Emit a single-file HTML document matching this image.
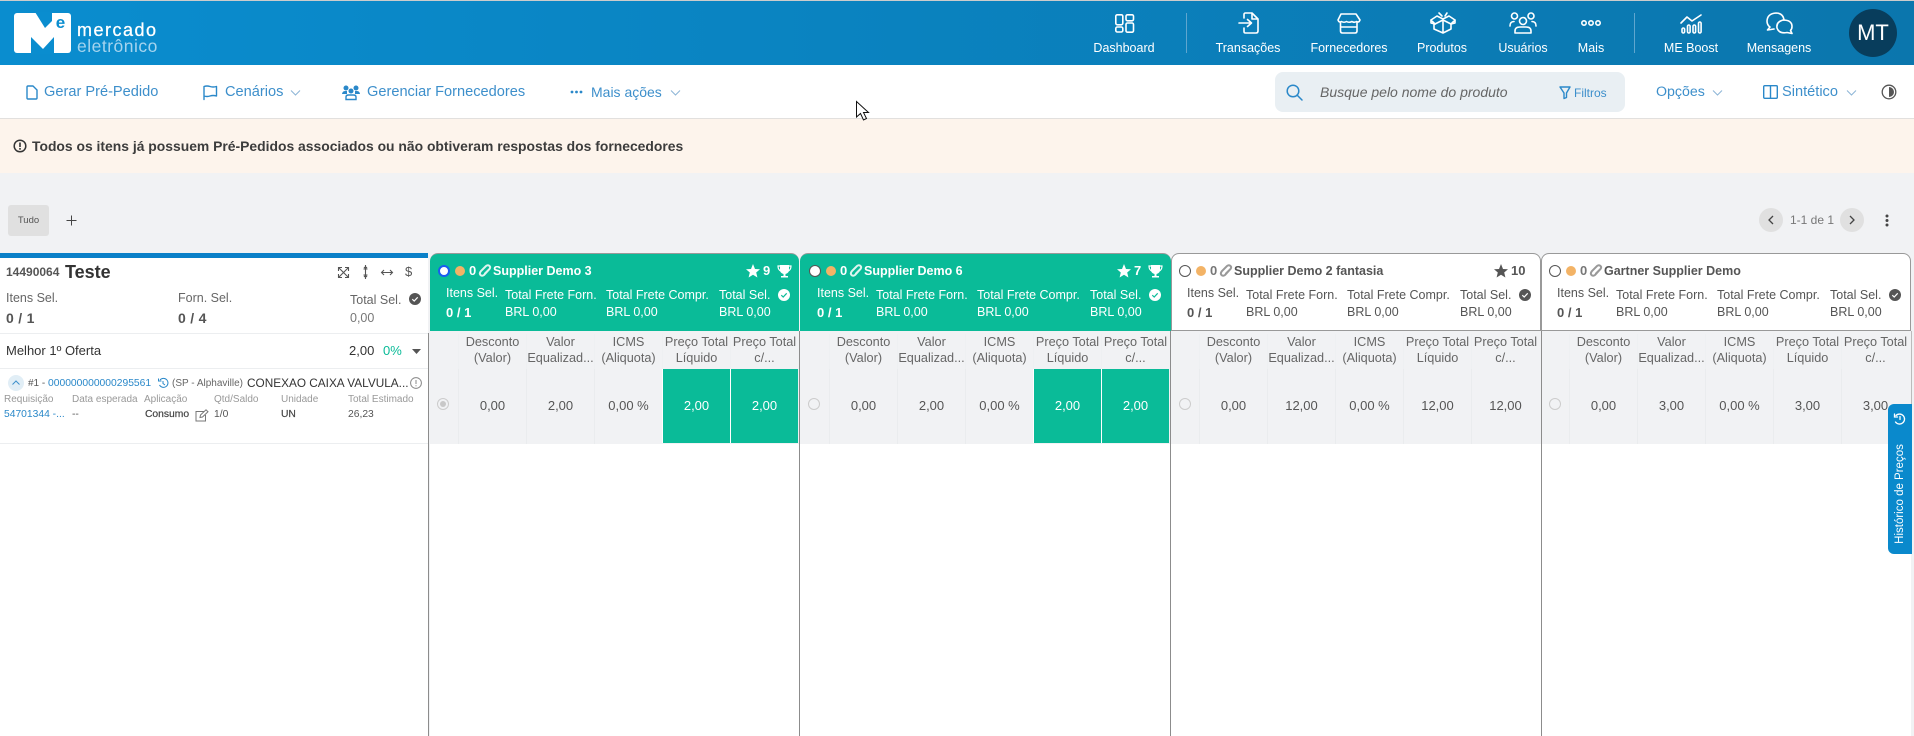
<!DOCTYPE html>
<html lang="pt-BR"><head><meta charset="utf-8"><title>Mercado Eletrônico</title>
<style>
*{box-sizing:border-box}
html,body{margin:0;padding:0;width:1914px;height:736px;overflow:hidden;background:#f1f2f4;font-family:"Liberation Sans",sans-serif;color:#555}
.a{position:absolute}
.t{position:absolute;white-space:nowrap;line-height:16px;height:16px}
svg{position:absolute;overflow:visible}
.nl{position:absolute;top:40px;width:110px;margin-left:-55px;text-align:center;color:#fff;font-size:12.5px;line-height:16px}
.nb{font-size:14.6px;color:#3d8fcb}
.w{fill:none;stroke:#fff;stroke-width:1.6;stroke-linecap:round;stroke-linejoin:round}
.b{fill:none;stroke:#2a88c9;stroke-width:1.4;stroke-linecap:round;stroke-linejoin:round}
.g{fill:none;stroke:#555;stroke-width:1.3;stroke-linecap:round;stroke-linejoin:round}
.col{position:absolute;top:253px;width:370px;height:483px}
.hd{position:absolute;left:0;top:0;width:369px;height:78px;border-radius:8px 8px 0 0;background:#0abb98;color:#fff;border-top:1px solid #999}
.col.x .hd{background:#fff;color:#555;border:1px solid #999;border-bottom:1px solid #999;width:370px}
.col .t{font-size:12.5px}
.hdr{position:absolute;left:0;top:78px;width:369px;height:37px;background:#fff}
.row{position:absolute;left:0;top:115px;width:369px;height:76px;background:#f1f2f4}
.th{position:absolute;top:81px;width:68px;height:35px;text-align:center;font-size:12.7px;line-height:16px;color:#666;white-space:nowrap;overflow:hidden;border-left:1px solid #eef0f2}
.td{position:absolute;top:116px;width:68px;height:75px;line-height:74px;text-align:center;font-size:13px;color:#555;border-left:1px solid #eaecee}
.td.v{background:#0abb98;color:#fff;border-left:1px solid #fff;top:116px;height:74px}
.n{font-weight:bold;font-size:12.5px!important}
.f{font-weight:bold;font-size:13px!important}
.radio{position:absolute;width:12px;height:12px;border-radius:50%;left:8px;top:145px;border:1px solid #ccc;background:#f1f2f4}
.sel{position:absolute;left:8px;top:12px;width:12px;height:12px;border-radius:50%;border:1.5px solid #555;background:#fff}
.or{position:absolute;left:25px;top:13px;width:10px;height:10px;border-radius:50%;background:#f3b366}
.vl{position:absolute;top:331px;width:1px;height:405px;background:#8c8c8c}
.lb{font-size:10px;color:#999}
.vv{font-size:10.3px;color:#555}
</style></head><body>

<!-- top bar -->
<div class="a" style="left:0;top:0;width:1914px;height:1px;background:#ccc"></div>
<div class="a" style="left:0;top:1px;width:1914px;height:64px;background:linear-gradient(90deg,#0a8dcf,#0b76ad)"></div>

<!-- logo -->
<svg style="left:0;top:0" width="170" height="65">
<rect x="14" y="13" width="57" height="40" rx="3" fill="#fff"/>
<polygon points="35,12 45,28 52,21 52,12" fill="#0a8dcf"/>
<polygon points="31,54 31,37 43,49 54,37 54,54" fill="#0a8dcf"/>
<text x="60.5" y="28" text-anchor="middle" font-family="Liberation Sans" font-weight="bold" font-size="17" fill="#0a8dcf">e</text>
</svg>
<div class="t" style="left:77px;top:22px;font-size:18px;color:#fff;letter-spacing:1.5px;-webkit-text-stroke:.3px #fff">mercado</div>
<div class="t" style="left:77px;top:38px;font-size:17.5px;color:#a5d4ee;letter-spacing:.5px">eletrônico</div>

<!-- nav icons -->
<svg style="left:1115px;top:14px" width="20" height="19" class="w"><rect x=".8" y=".8" width="7" height="10" rx="1.5"/><rect x="11" y=".8" width="7.5" height="6" rx="1.5"/><rect x=".8" y="13" width="7" height="5" rx="1.5"/><rect x="11" y="9" width="7.5" height="9.2" rx="1.5"/></svg>
<div class="nl" style="left:1124px">Dashboard</div>
<div class="a" style="left:1186px;top:13px;width:1px;height:40px;background:#5fa6cf"></div>

<svg style="left:1238px;top:12px" width="22" height="22" class="w"><path d="M6 6V2.5Q6 1 7.5 1H14L20 7V19Q20 21 18 21H7.500Q6 21 6 19.500V16"/><path d="M14 1.500V7H19.500"/><path d="M1 11H13M9.500 7.500L13.500 11L9.500 14.500"/></svg>
<div class="nl" style="left:1248px">Transações</div>

<svg style="left:1337px;top:13px" width="24" height="21" class="w"><path d="M4 1H19L23 7Q22 10 19.500 8.500Q17 10 15 8.500Q12 10 9.500 8.500Q7 10 4.500 8.500Q2 10 1 7Z"/><path d="M3.500 9V18Q3.500 20 5.500 20H18Q20 20 20 18V9M3.500 14H20"/></svg>
<div class="nl" style="left:1349px">Fornecedores</div>

<svg style="left:1430px;top:12px" width="26" height="22" class="w"><path d="M12 4L9 1M15 4L17 1"/><path d="M1 8L7 4L13 7L19 4L25 8L21 12L13 8L5 12Z"/><path d="M4 12V17L13 21L21 17V12M13 8V21"/><path d="M1 8V11L5 12M25 8V11L21 12"/></svg>
<div class="nl" style="left:1442px">Produtos</div>

<svg style="left:1509px;top:12px" width="28" height="22" class="w"><circle cx="5.500" cy="4" r="3"/><circle cx="22" cy="4" r="3"/><circle cx="14" cy="9" r="3.500"/><path d="M1 14Q1 9.500 5 9.500M27 14Q27 9.500 23 9.500"/><path d="M6 21V19Q6 15 11 15H17Q22 15 22 19V21Z"/></svg>
<div class="nl" style="left:1523px">Usuários</div>

<svg style="left:1581px;top:19px" width="20" height="8" class="w"><circle cx="3" cy="4" r="2.200"/><circle cx="10" cy="4" r="2.200"/><circle cx="17" cy="4" r="2.200"/></svg>
<div class="nl" style="left:1591px">Mais</div>
<div class="a" style="left:1634px;top:13px;width:1px;height:40px;background:#5fa6cf"></div>

<svg style="left:1680px;top:14px" width="23" height="20" class="w"><path d="M1 9L7 3L12 7L21 1"/><rect x="2" y="14" width="2.600" height="5" rx="1.300"/><rect x="7.500" y="11" width="2.600" height="8" rx="1.300"/><rect x="13" y="11" width="2.600" height="8" rx="1.300"/><rect x="18.500" y="8" width="2.600" height="11" rx="1.300"/></svg>
<div class="nl" style="left:1691px">ME Boost</div>

<svg style="left:1766px;top:12px" width="28" height="23" class="w"><path d="M18 8Q17 1 10 1Q1.500 1.500 1 9Q1 13 4 15L1.500 18L8 17"/><path d="M17 8Q26 8 26 14.500Q26 17 24.500 18.500L26 21.500L21 20.500Q13 22 11 16Q10 10 17 8Z"/></svg>
<div class="nl" style="left:1779px">Mensagens</div>

<div class="a" style="left:1849px;top:9px;width:48px;height:48px;border-radius:50%;background:#083d5c;color:#fff;text-align:center;line-height:48px;font-size:22px">MT</div>

<!-- toolbar -->
<div class="a" style="left:0;top:65px;width:1914px;height:53px;background:#fff"></div>
<svg style="left:26px;top:85px" width="12" height="15" class="b"><path d="M1 2Q1 1 2 1H7L11 5V13Q11 14 10 14H2Q1 14 1 13Z"/></svg>
<div class="t nb" style="left:44px;top:84px">Gerar Pré-Pedido</div>
<svg style="left:203px;top:85px" width="15" height="15" class="b"><path d="M1 14.500V1.500Q4 .5 7 1.500T13.500 1.500V11Q10 10 7 11T1 11"/></svg>
<div class="t nb" style="left:225px;top:84px">Cenários</div>
<svg style="left:290px;top:90px" width="11" height="6" fill="none" stroke="#8cb5d6" stroke-width="1"><path d="M1 .5L5.500 5L10 .5"/></svg>
<svg style="left:342px;top:85px" width="18" height="15"><g fill="#2a88c9"><circle cx="4" cy="3" r="2.500"/><circle cx="14" cy="3" r="2.500"/><circle cx="9" cy="6" r="2.500"/><path d="M0 10Q0 6 3 6H5V9H0ZM18 10Q18 6 15 6H13V9H18Z"/></g><path d="M4 14.500V12Q4 10 6.500 10H11.500Q14 10 14 12V14.500Z" fill="none" stroke="#2a88c9" stroke-width="1.400"/></svg>
<div class="t nb" style="left:367px;top:84px">Gerenciar Fornecedores</div>
<svg style="left:570px;top:90px" width="13" height="4" fill="#2a88c9"><circle cx="2" cy="2" r="1.400"/><circle cx="6.500" cy="2" r="1.400"/><circle cx="11" cy="2" r="1.400"/></svg>
<div class="t nb" style="left:591px;top:84px;font-size:14px">Mais ações</div>
<svg style="left:670px;top:90px" width="11" height="6" fill="none" stroke="#8cb5d6" stroke-width="1"><path d="M1 .5L5.500 5L10 .5"/></svg>

<div class="a" style="left:1275px;top:72px;width:350px;height:40px;border-radius:8px;background:#e9eff3"></div>
<svg style="left:1286px;top:84px" width="17" height="17" fill="none" stroke="#2a88c9" stroke-width="1.500" stroke-linecap="round"><circle cx="7" cy="7" r="5.800"/><path d="M11 11L16 16"/></svg>
<div class="t" style="left:1320px;top:84px;font-size:14px;font-style:italic;color:#666">Busque pelo nome do produto</div>
<svg style="left:1559px;top:86px" width="12" height="13" class="b"><path d="M1 1H11L7.500 7V11.500L5 12.500V7Z"/></svg>
<div class="t" style="left:1574px;top:85px;font-size:12px;color:#3d8fcb">Filtros</div>
<div class="t nb" style="left:1656px;top:84px;font-size:14.2px">Opções</div>
<svg style="left:1712px;top:90px" width="11" height="6" fill="none" stroke="#8cb5d6" stroke-width="1"><path d="M1 .5L5.500 5L10 .5"/></svg>
<svg style="left:1763px;top:85px" width="15" height="14" class="b"><rect x=".7" y=".7" width="13.600" height="12.600" rx="1"/><path d="M7.500 1V13"/></svg>
<div class="t nb" style="left:1782px;top:84px">Sintético</div>
<svg style="left:1846px;top:90px" width="11" height="6" fill="none" stroke="#8cb5d6" stroke-width="1"><path d="M1 .5L5.500 5L10 .5"/></svg>
<svg style="left:1881px;top:84px" width="16" height="16"><circle cx="8" cy="8" r="6.800" fill="#fff" stroke="#555" stroke-width="1.300"/><path d="M8 3A5 5 0 0 1 8 13Z" fill="#555"/></svg>

<!-- banner -->
<div class="a" style="left:0;top:118px;width:1914px;height:1px;background:#e2e0de"></div>
<div class="a" style="left:0;top:119px;width:1914px;height:54px;background:#fdf4ec"></div>
<svg style="left:13px;top:139px" width="14" height="14"><circle cx="7" cy="7" r="5.800" fill="none" stroke="#333" stroke-width="1.500"/><rect x="6.200" y="3.500" width="1.600" height="4.500" fill="#333"/><rect x="6.200" y="9" width="1.600" height="1.700" fill="#333"/></svg>
<div class="t" style="left:32px;top:138px;font-size:13.9px;font-weight:bold;color:#3c3c3c">Todos os itens já possuem Pré-Pedidos associados ou não obtiveram respostas dos fornecedores</div>

<!-- cursor -->
<svg style="left:855px;top:100px" width="16" height="24"><path d="M1.500 1.500V17L5.500 13.500L8.500 20L11.500 18.500L8.500 12.500H13.500Z" fill="#fff" stroke="#111" stroke-width="1"/></svg>

<!-- tab row -->
<div class="a" style="left:8px;top:205px;width:41px;height:31px;background:#e0e0e0;border-radius:3px;text-align:center;font-size:9.500px;line-height:31px;color:#555">Tudo</div>
<svg style="left:66px;top:215px" width="11" height="11" stroke="#444" stroke-width="1"><path d="M5.500 .5V10.500M.5 5.500H10.500"/></svg>
<div class="a" style="left:1759px;top:208px;width:24px;height:24px;border-radius:50%;background:#e0e0e0"></div>
<svg style="left:1768px;top:215px" width="6" height="10" fill="none" stroke="#444" stroke-width="1.300"><path d="M5 1L1 5L5 9"/></svg>
<div class="t" style="left:1790px;top:212px;font-size:12px;color:#777">1-1 de 1</div>
<div class="a" style="left:1840px;top:208px;width:24px;height:24px;border-radius:50%;background:#e0e0e0"></div>
<svg style="left:1849px;top:215px" width="6" height="10" fill="none" stroke="#444" stroke-width="1.300"><path d="M1 1L5 5L1 9"/></svg>
<svg style="left:1885px;top:214px" width="4" height="13" fill="#444"><circle cx="2" cy="2" r="1.500"/><circle cx="2" cy="6.500" r="1.500"/><circle cx="2" cy="11" r="1.500"/></svg>

<!-- left panel -->
<div class="a" style="left:0;top:253px;width:428px;height:483px;background:#fff"></div>
<div class="a" style="left:0;top:253px;width:428px;height:5px;background:#0a80c8"></div>
<div class="t" style="left:6px;top:264px;font-size:12px;font-weight:bold;color:#555">14490064</div>
<div class="t" style="left:65px;top:264px;font-size:18px;font-weight:bold;color:#333">Teste</div>
<svg style="left:338px;top:267px" width="11" height="11" fill="none" stroke="#555" stroke-width="1.100"><path d="M.5 4V.5H4M7 .5H10.500V4M.5 7V10.500H4M7 10.500H10.500V7M1 1L10 10M10 1L1 10"/></svg>
<svg style="left:363px;top:265px" width="5" height="14" fill="none" stroke="#555" stroke-width="1.100"><path d="M2.500 0V14M.5 4H4.500M.5 10H4.500M1 2L2.500 3.500L4 2M1 12L2.500 10.500L4 12"/></svg>
<svg style="left:381px;top:269px" width="12" height="7" fill="none" stroke="#555" stroke-width="1.100"><path d="M.5 3.500H11.500M3 1L.5 3.500L3 6M9 1L11.500 3.500L9 6"/></svg>
<div class="t" style="left:405px;top:264px;font-size:13px;color:#555">$</div>
<div class="t" style="left:6px;top:290px;font-size:12.500px;color:#666">Itens Sel.</div>
<div class="t" style="left:6px;top:310px;font-size:14px;font-weight:bold;color:#555;letter-spacing:.3px">0 / 1</div>
<div class="t" style="left:178px;top:290px;font-size:12.500px;color:#666">Forn. Sel.</div>
<div class="t" style="left:178px;top:310px;font-size:14px;font-weight:bold;color:#555;letter-spacing:.3px">0 / 4</div>
<div class="t" style="left:350px;top:292px;font-size:12.500px;color:#666">Total Sel.</div>
<svg style="left:409px;top:293px" width="12" height="12"><circle cx="6" cy="6" r="6" fill="#555"/><path d="M3.300 6.200L5.200 8L8.700 4.300" fill="none" stroke="#fff" stroke-width="1.200"/></svg>
<div class="t" style="left:350px;top:310px;font-size:12.500px;color:#777">0,00</div>
<div class="a" style="left:0;top:333px;width:428px;height:1px;background:#eceef0"></div>
<div class="t" style="left:6px;top:343px;font-size:13px;color:#333">Melhor 1º Oferta</div>
<div class="t" style="left:349px;top:343px;font-size:13px;color:#333">2,00</div>
<div class="t" style="left:383px;top:343px;font-size:13px;color:#0abb98">0%</div>
<svg style="left:412px;top:349px" width="9" height="5" fill="#555"><path d="M0 0H9L4.500 5Z"/></svg>
<div class="a" style="left:0;top:368px;width:428px;height:1px;background:#eceef0"></div>
<div class="a" style="left:8px;top:375px;width:16px;height:16px;border-radius:50%;background:#e1eef6"></div>
<svg style="left:12px;top:380px" width="8" height="5" fill="none" stroke="#3d8fcb" stroke-width="1"><path d="M.5 4.500L4 1L7.500 4.500"/></svg>
<div class="t" style="left:28px;top:376px;font-size:10px;color:#555">#1 - <span style="color:#2a88c9;font-size:10.3px">000000000000295561</span></div>
<svg style="left:158px;top:378px" width="10" height="11" fill="none" stroke="#2a88c9" stroke-width="1"><path d="M2 2A4.500 4.500 0 1 1 1.500 7M.5 .5V3H3.500M5 3V5.500L7 7"/></svg>
<div class="t" style="left:172px;top:376px;font-size:10px;color:#666">(SP - Alphaville)</div>
<div class="t" style="left:247px;top:375px;font-size:11.8px;color:#333">CONEXAO CAIXA VALVULA...</div>
<svg style="left:410px;top:377px" width="12" height="12" fill="none" stroke="#888" stroke-width="1"><circle cx="6" cy="6" r="5.400"/><path d="M6 3V7M6 8.300V9.300"/></svg>
<div class="t lb" style="left:4px;top:392px">Requisição</div>
<div class="t lb" style="left:72px;top:392px">Data esperada</div>
<div class="t lb" style="left:144px;top:392px">Aplicação</div>
<div class="t lb" style="left:214px;top:392px">Qtd/Saldo</div>
<div class="t lb" style="left:281px;top:392px">Unidade</div>
<div class="t lb" style="left:348px;top:392px">Total Estimado</div>
<div class="t vv" style="left:4px;top:407px;color:#2a88c9">54701344 -...</div>
<div class="t vv" style="left:72px;top:407px">--</div>
<div class="t vv" style="left:145px;top:407px;color:#444;-webkit-text-stroke:.2px #444">Consumo</div>
<svg style="left:195px;top:409px" width="14" height="13" fill="none" stroke="#777" stroke-width="1"><path d="M9 2.500H1V12H10.500V6M5 8.500L5.500 6L11 .8L13 2.800L7.500 8Z"/></svg>
<div class="t vv" style="left:214px;top:407px">1/0</div>
<div class="t vv" style="left:281px;top:407px;color:#444;-webkit-text-stroke:.2px #444">UN</div>
<div class="t vv" style="left:348px;top:407px">26,23</div>
<div class="a" style="left:0;top:443px;width:428px;height:1px;background:#eceef0"></div>

<!-- col 1 -->
<div class="col" style="left:430px">
 <div class="hd"></div>
 <div class="a" style="left:8px;top:12px;width:12px;height:12px;border-radius:50%;border:2px solid #1a5cf0;background:#fff"></div>
 <div class="or"></div>
 <div class="t f" style="left:39px;top:10px;color:#fff">0</div>
 <svg style="left:49px;top:11px" width="12" height="13" fill="none" stroke="#dff5ef" stroke-width="2"><path d="M10.500 5L5 11Q3 12.500 1.500 11T2 7L7 2Q9 .5 10.500 2T10 5.500L5.500 10"/></svg>
 <div class="t n" style="left:63px;top:10px;color:#fff">Supplier Demo 3</div>
 <svg style="left:316px;top:11px" width="14" height="14" fill="#fff"><path d="M7 0L9 5L14 5.300L10.200 8.500L11.400 13.500L7 10.800L2.600 13.500L3.800 8.500L0 5.300L5 5Z"/></svg>
 <div class="t f" style="left:333px;top:10px;color:#fff">9</div>
 <svg style="left:347px;top:11px" width="15" height="14"><path d="M3 1H12V6Q12 9 8.500 10V12H11V13.500H4V12H6.500V10Q3 9 3 6Z" fill="#fff"/><path d="M3 2H1Q1 6 4 7M12 2H14Q14 6 11 7" fill="none" stroke="#fff" stroke-width="1.200"/></svg>
 <div class="t" style="left:16px;top:32px;color:#fff">Itens Sel.</div>
 <div class="t f" style="left:16px;top:52px;color:#fff">0 / 1</div>
 <div class="t" style="left:75px;top:34px;color:#fff">Total Frete Forn.</div>
 <div class="t" style="left:75px;top:51px;color:#fff">BRL 0,00</div>
 <div class="t" style="left:176px;top:34px;color:#fff">Total Frete Compr.</div>
 <div class="t" style="left:176px;top:51px;color:#fff">BRL 0,00</div>
 <div class="t" style="left:289px;top:34px;color:#fff">Total Sel.</div>
 <div class="t" style="left:289px;top:51px;color:#fff">BRL 0,00</div>
 <svg style="left:348px;top:36px" width="12" height="12"><circle cx="6" cy="6" r="6" fill="#fff"/><path d="M3.300 6.200L5.200 8L8.700 4.300" fill="none" stroke="#0abb98" stroke-width="1.200"/></svg>
 <div class="row"></div>
 <div class="th" style="left:28px">Desconto<br>(Valor)</div><div class="th" style="left:96px">Valor<br>Equalizad...</div><div class="th" style="left:164px">ICMS<br>(Aliquota)</div><div class="th" style="left:232px">Preço Total<br>Líquido</div><div class="th" style="left:300px">Preço Total<br>c/...</div>
 <div class="td" style="left:28px">0,00</div><div class="td" style="left:96px">2,00</div><div class="td" style="left:164px">0,00 %</div><div class="td v" style="left:232px">2,00</div><div class="td v" style="left:300px">2,00</div>
 <div class="radio" style="left:7px"></div><div class="a" style="left:10px;top:148px;width:6px;height:6px;border-radius:50%;background:#c8c8c8"></div>
</div>

<!-- col 2 -->
<div class="col" style="left:801px">
 <div class="hd" style="left:-1px;width:371px"></div>
 <div class="a" style="left:8px;top:12px;width:12px;height:12px;border-radius:50%;border:1.500px solid #555;background:#fff"></div>
 <div class="or"></div>
 <div class="t f" style="left:39px;top:10px;color:#fff">0</div>
 <svg style="left:49px;top:11px" width="12" height="13" fill="none" stroke="#dff5ef" stroke-width="2"><path d="M10.500 5L5 11Q3 12.500 1.500 11T2 7L7 2Q9 .5 10.500 2T10 5.500L5.500 10"/></svg>
 <div class="t n" style="left:63px;top:10px;color:#fff">Supplier Demo 6</div>
 <svg style="left:316px;top:11px" width="14" height="14" fill="#fff"><path d="M7 0L9 5L14 5.300L10.200 8.500L11.400 13.500L7 10.800L2.600 13.500L3.800 8.500L0 5.300L5 5Z"/></svg>
 <div class="t f" style="left:333px;top:10px;color:#fff">7</div>
 <svg style="left:347px;top:11px" width="15" height="14"><path d="M3 1H12V6Q12 9 8.500 10V12H11V13.500H4V12H6.500V10Q3 9 3 6Z" fill="#fff"/><path d="M3 2H1Q1 6 4 7M12 2H14Q14 6 11 7" fill="none" stroke="#fff" stroke-width="1.200"/></svg>
 <div class="t" style="left:16px;top:32px;color:#fff">Itens Sel.</div>
 <div class="t f" style="left:16px;top:52px;color:#fff">0 / 1</div>
 <div class="t" style="left:75px;top:34px;color:#fff">Total Frete Forn.</div>
 <div class="t" style="left:75px;top:51px;color:#fff">BRL 0,00</div>
 <div class="t" style="left:176px;top:34px;color:#fff">Total Frete Compr.</div>
 <div class="t" style="left:176px;top:51px;color:#fff">BRL 0,00</div>
 <div class="t" style="left:289px;top:34px;color:#fff">Total Sel.</div>
 <div class="t" style="left:289px;top:51px;color:#fff">BRL 0,00</div>
 <svg style="left:348px;top:36px" width="12" height="12"><circle cx="6" cy="6" r="6" fill="#fff"/><path d="M3.300 6.200L5.200 8L8.700 4.300" fill="none" stroke="#0abb98" stroke-width="1.200"/></svg>
 <div class="row" style="left:-1px;width:370px"></div>
 <div class="th" style="left:28px">Desconto<br>(Valor)</div><div class="th" style="left:96px">Valor<br>Equalizad...</div><div class="th" style="left:164px">ICMS<br>(Aliquota)</div><div class="th" style="left:232px">Preço Total<br>Líquido</div><div class="th" style="left:300px">Preço Total<br>c/...</div>
 <div class="td" style="left:28px">0,00</div><div class="td" style="left:96px">2,00</div><div class="td" style="left:164px">0,00 %</div><div class="td v" style="left:232px">2,00</div><div class="td v" style="left:300px">2,00</div>
 <div class="radio" style="left:7px"></div>
</div>

<!-- col 3 -->
<div class="col x" style="left:1171px">
 <div class="hd"></div>
 <div class="sel"></div>
 <div class="or"></div>
 <div class="t f" style="left:39px;top:10px;color:#777">0</div>
 <svg style="left:49px;top:11px" width="12" height="13" fill="none" stroke="#999" stroke-width="2"><path d="M10.500 5L5 11Q3 12.500 1.500 11T2 7L7 2Q9 .5 10.500 2T10 5.500L5.500 10"/></svg>
 <div class="t n" style="left:63px;top:10px;color:#555">Supplier Demo 2 fantasia</div>
 <svg style="left:323px;top:11px" width="14" height="14" fill="#555"><path d="M7 0L9 5L14 5.300L10.200 8.500L11.400 13.500L7 10.800L2.600 13.500L3.800 8.500L0 5.300L5 5Z"/></svg>
 <div class="t f" style="left:340px;top:10px;color:#555">10</div>
 <div class="t" style="left:16px;top:32px">Itens Sel.</div>
 <div class="t f" style="left:16px;top:52px">0 / 1</div>
 <div class="t" style="left:75px;top:34px">Total Frete Forn.</div>
 <div class="t" style="left:75px;top:51px">BRL 0,00</div>
 <div class="t" style="left:176px;top:34px">Total Frete Compr.</div>
 <div class="t" style="left:176px;top:51px">BRL 0,00</div>
 <div class="t" style="left:289px;top:34px">Total Sel.</div>
 <div class="t" style="left:289px;top:51px">BRL 0,00</div>
 <svg style="left:348px;top:36px" width="12" height="12"><circle cx="6" cy="6" r="6" fill="#555"/><path d="M3.300 6.200L5.200 8L8.700 4.300" fill="none" stroke="#fff" stroke-width="1.200"/></svg>
 <div class="row" style="width:370px"></div>
 <div class="th" style="left:28px">Desconto<br>(Valor)</div><div class="th" style="left:96px">Valor<br>Equalizad...</div><div class="th" style="left:164px">ICMS<br>(Aliquota)</div><div class="th" style="left:232px">Preço Total<br>Líquido</div><div class="th" style="left:300px">Preço Total<br>c/...</div>
 <div class="td" style="left:28px">0,00</div><div class="td" style="left:96px">12,00</div><div class="td" style="left:164px">0,00 %</div><div class="td" style="left:232px">12,00</div><div class="td" style="left:300px">12,00</div>
 <div class="radio"></div>
</div>

<!-- col 4 -->
<div class="col x" style="left:1541px">
 <div class="hd"></div>
 <div class="sel"></div>
 <div class="or"></div>
 <div class="t f" style="left:39px;top:10px;color:#777">0</div>
 <svg style="left:49px;top:11px" width="12" height="13" fill="none" stroke="#999" stroke-width="2"><path d="M10.500 5L5 11Q3 12.500 1.500 11T2 7L7 2Q9 .5 10.500 2T10 5.500L5.500 10"/></svg>
 <div class="t n" style="left:63px;top:10px;color:#555">Gartner Supplier Demo</div>
 <div class="t" style="left:16px;top:32px">Itens Sel.</div>
 <div class="t f" style="left:16px;top:52px">0 / 1</div>
 <div class="t" style="left:75px;top:34px">Total Frete Forn.</div>
 <div class="t" style="left:75px;top:51px">BRL 0,00</div>
 <div class="t" style="left:176px;top:34px">Total Frete Compr.</div>
 <div class="t" style="left:176px;top:51px">BRL 0,00</div>
 <div class="t" style="left:289px;top:34px">Total Sel.</div>
 <div class="t" style="left:289px;top:51px">BRL 0,00</div>
 <svg style="left:348px;top:36px" width="12" height="12"><circle cx="6" cy="6" r="6" fill="#555"/><path d="M3.300 6.200L5.200 8L8.700 4.300" fill="none" stroke="#fff" stroke-width="1.200"/></svg>
 <div class="row" style="width:370px"></div>
 <div class="th" style="left:28px">Desconto<br>(Valor)</div><div class="th" style="left:96px">Valor<br>Equalizad...</div><div class="th" style="left:164px">ICMS<br>(Aliquota)</div><div class="th" style="left:232px">Preço Total<br>Líquido</div><div class="th" style="left:300px">Preço Total<br>c/...</div>
 <div class="td" style="left:28px">0,00</div><div class="td" style="left:96px">3,00</div><div class="td" style="left:164px">0,00 %</div><div class="td" style="left:232px">3,00</div><div class="td" style="left:300px">3,00</div>
 <div class="radio"></div>
</div>

<!-- white area under rows -->
<div class="a" style="left:430px;top:444px;width:1481px;height:292px;background:#fff"></div>

<!-- vertical lines -->
<div class="vl" style="left:428px;top:333px;height:403px"></div>
<div class="vl" style="left:799px"></div>
<div class="vl" style="left:1170px"></div>
<div class="vl" style="left:1541px"></div>
<div class="vl" style="left:1911px;height:113px;background:#bbb"></div>

<!-- side tab -->
<div class="a" style="left:1888px;top:404px;width:24px;height:150px;background:#0a89cc;border-radius:6px 0 0 6px"></div>
<div class="t" style="left:1840px;top:486px;width:120px;text-align:center;color:#fff;font-size:11.5px;transform:rotate(-90deg);transform-origin:center;">Histórico de Preços</div>
<svg style="left:1894px;top:413px" width="12" height="12" fill="none" stroke="#fff" stroke-width="1.300" stroke-linecap="round"><path d="M2 2.500A5 5 0 1 1 1.500 9M.5 1V4H3.500M6 3.500V6.500"/></svg>
</body></html>
